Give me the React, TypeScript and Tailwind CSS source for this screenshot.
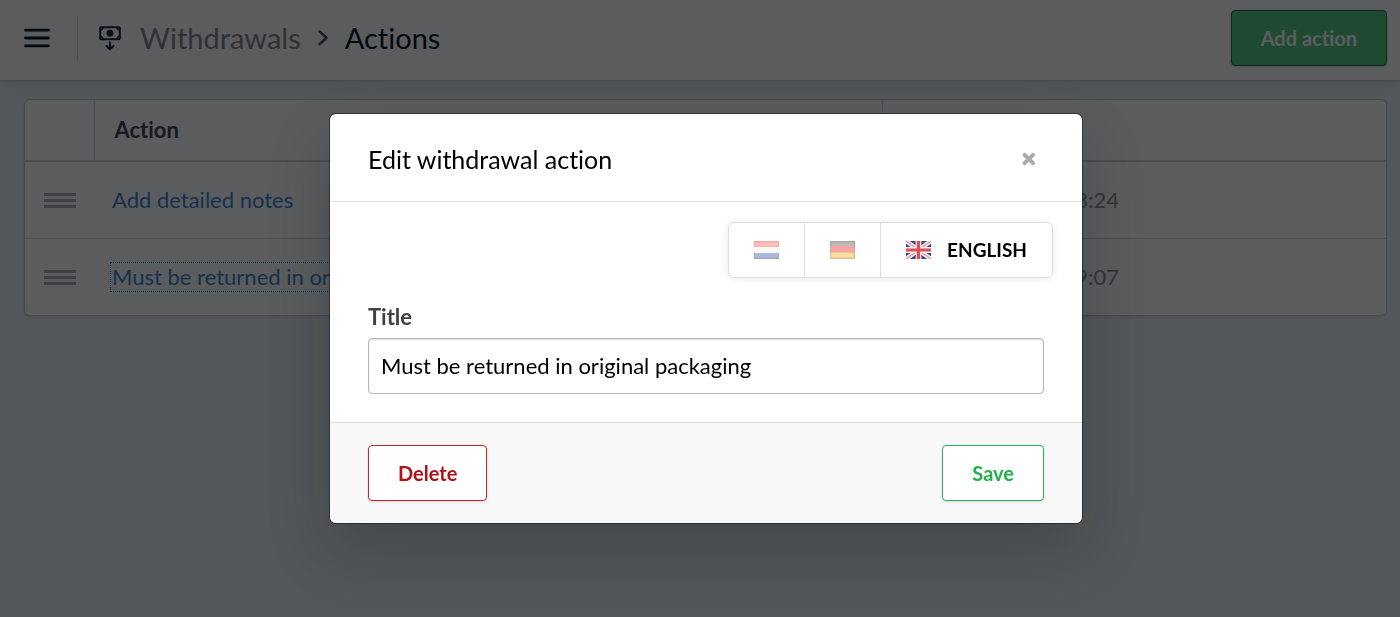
import { useState } from 'react';

const rows = [
  { title: 'Add detailed notes', date: '12 Aug. 2021 at 08:24', focused: false },
  { title: 'Must be returned in original packaging', date: '12 Aug. 2021 at 09:07', focused: true },
];

function MenuIcon() {
  return (
    <svg width="26" height="20" viewBox="0 0 26 20" fill="none" stroke="#04101e" strokeWidth="2.8" strokeLinecap="round" aria-hidden="true">
      <path d="M1.5 2.2h23M1.5 10h23M1.5 17.9h23" />
    </svg>
  );
}

function WithdrawIcon() {
  return (
    <svg width="24" height="26" viewBox="0 0 24 26" fill="none" stroke="#14202c" aria-hidden="true">
      <rect x="2.2" y="2.2" width="19.6" height="12" rx="0.8" strokeWidth="2" />
      <circle cx="12" cy="8.2" r="3.4" fill="#14202c" stroke="none" />
      <path d="M3 5.4L5.4 3M21 5.4L18.6 3M3 11l2.4 2.4M21 11l-2.4 2.4" strokeWidth="1.3" />
      <path d="M12 17.6v6M8.6 21L12 24.2l3.4-3.2" strokeWidth="2" strokeLinecap="round" strokeLinejoin="round" />
    </svg>
  );
}

function ChevronIcon() {
  return (
    <svg width="12" height="18" viewBox="0 0 12 18" fill="none" stroke="#4a5158" strokeWidth="2.6" strokeLinecap="round" strokeLinejoin="round" aria-hidden="true">
      <path d="M2.5 2.4l7 6.4-7 6.4" />
    </svg>
  );
}

function GripIcon() {
  return (
    <svg width="32" height="16" viewBox="0 0 32 16" fill="#a8afb1" aria-hidden="true">
      <path d="M0 1h32v3H0zM0 7h32v3H0zM0 13h32v3H0z" />
    </svg>
  );
}

function CloseIcon() {
  return (
    <svg width="14" height="14" viewBox="0 0 14 14" fill="none" stroke="#a9aaab" strokeWidth="4" strokeLinecap="round" aria-hidden="true">
      <path d="M2.6 2.8l8.4 8.4M11 2.8l-8.4 8.4" />
    </svg>
  );
}

function FlagNl() {
  return (
    <svg width="25" height="18" viewBox="0 0 26 18" preserveAspectRatio="none" aria-hidden="true">
      <path fill="#f3a8a5" d="M0 0h26v6H0z" />
      <path fill="#fbbdba" d="M1 1.5h24v4H1z" />
      <path fill="#f8f8f8" d="M0 6h26v6H0z" />
      <path fill="#a2a8bb" d="M0 12h26v6H0z" />
      <path fill="#adb9dc" d="M1 12h24v4.5H1z" />
    </svg>
  );
}

function FlagDe() {
  return (
    <svg width="25" height="18" viewBox="0 0 26 18" preserveAspectRatio="none" aria-hidden="true">
      <path fill="#a9a9a9" d="M0 0h26v6H0z" />
      <path fill="#c2bcbc" d="M1.5 1.5h23V6h-23z" />
      <path fill="#dba5a3" d="M0 6h26v6H0z" />
      <path fill="#f6a5a2" d="M1.5 5h23v6.5h-23z" />
      <path fill="#e3bd9c" d="M0 12h26v6H0z" />
      <path fill="#fbdf9c" d="M1.5 11.5h23v5h-23z" />
    </svg>
  );
}

function FlagGb() {
  return (
    <svg width="25" height="18" viewBox="0 0 26 18" preserveAspectRatio="none" aria-hidden="true">
      <path fill="#3d4580" d="M0 0h26v18H0z" />
      <path stroke="#f0eaf0" strokeWidth="4.6" d="M0 0l26 18M26 0L0 18" />
      <path stroke="#dd9aa4" strokeWidth="1.2" d="M0 0l26 18M26 0L0 18" />
      <path fill="#f8e8ea" d="M10 0h6v18h-6zM0 6h26v6H0z" />
      <path fill="#dc5058" d="M11.3 0h3.4v18h-3.4zM0 7.6h26v2.8H0z" />
    </svg>
  );
}

const languages = [
  { code: 'nl', name: 'Nederlands', Flag: FlagNl },
  { code: 'de', name: 'Deutsch', Flag: FlagDe },
  { code: 'en', name: 'English', Flag: FlagGb },
];

export default function App() {
  const [title, setTitle] = useState('Must be returned in original packaging');
  const [language, setLanguage] = useState('en');

  return (
    <div className="min-h-screen bg-[#ebf1f5] font-['Lato',sans-serif] text-[22px] leading-8 [font-variant-ligatures:none]">
      <header className="bg-white pb-1 shadow-[0_1px_2px_rgba(20,30,40,0.12),0_4px_16px_rgba(20,30,40,0.12)]">
        <div className="flex h-19 items-center justify-between pr-[13px] pl-6">
          <div className="flex items-center">
            <button type="button" aria-label="Menu" className="pr-[27px]">
              <MenuIcon />
            </button>
            <nav aria-label="Breadcrumb" className="flex h-11 items-center border-l border-[#d9dadb] pl-5 text-[29px]">
              <WithdrawIcon />
              <a href="#withdrawals" className="ml-[18px] text-[#848689]">Withdrawals</a>
              <span className="mx-4"><ChevronIcon /></span>
              <span className="text-[#04101e]">Actions</span>
            </nav>
          </div>
          <button type="button" className="h-14 rounded border border-[#2a6b40] bg-[#57cb80] px-[29px] text-xl font-bold text-white shadow-sm">
            Add action
          </button>
        </div>
      </header>

      <main className="pt-[19px] pr-[13px] pl-6">
        <div className="rounded-md border border-[#c3cbcf] bg-white shadow-sm">
          <table className="w-full table-fixed border-collapse text-left">
            <thead>
              <tr className="h-[61px] border-b-2 border-[#d0d2d4]">
                <td className="w-[69px] border-r border-[#dcdee0]" />
                <th className="border-r border-[#dcdee0] px-5 font-bold text-[#41474c]">Action</th>
                <th className="w-[504px] px-5 font-bold text-[#41474c]">Modified</th>
              </tr>
            </thead>
            <tbody>
              {rows.map((row) => (
                <tr key={row.title} className="h-[77px] border-t border-[#d6d8da]">
                  <td className="pl-[19px]"><GripIcon /></td>
                  <td className="px-4">
                    <a
                      href="#edit"
                      className={row.focused ? 'block w-fit border border-dotted border-[#1e70bf] px-px leading-7' : 'block w-fit px-0.5 leading-7'}
                    >
                      <span className="text-[#3f84cc]">{row.title}</span>
                    </a>
                  </td>
                  <td className="px-5 text-[#8f9294]">{row.date}</td>
                </tr>
              ))}
            </tbody>
          </table>
        </div>
      </main>

      <div className="fixed inset-0 flex items-start justify-center bg-[rgb(2,4,8)]/65 pt-[114px] pl-3">
        <section
          role="dialog"
          aria-modal="true"
          aria-labelledby="dialog-title"
          className="w-full max-w-[752px] overflow-hidden rounded-md bg-white shadow-[0_0_0_1px_rgba(10,15,25,0.5),0_28px_64px_rgba(0,0,0,0.2)]"
        >
          <div className="flex h-22 items-center justify-between border-b border-[#dedfe0] px-[38px] pt-[3px]">
            <h2 id="dialog-title" className="text-[25px] text-black">Edit withdrawal action</h2>
            <button type="button" aria-label="Close" className="p-2">
              <CloseIcon />
            </button>
          </div>

          <div className="flex flex-col px-[38px] pt-5 pb-7">
            <div className="-mr-[9px] flex self-end rounded-md border border-[#dcdddd] shadow-[0_1px_8px_rgba(0,0,0,0.08)]">
              {languages.map(({ code, name, Flag }) => (
                <button
                  key={code}
                  type="button"
                  aria-label={name}
                  aria-pressed={language === code}
                  onClick={() => setLanguage(code)}
                  className="flex h-[54px] items-center gap-4 border-l border-[#dcdddd] px-[25px] text-[19px] font-bold text-black uppercase first:border-l-0"
                >
                  <Flag />
                  {language === code && <span>{name}</span>}
                </button>
              ))}
            </div>

            <label htmlFor="action-title" className="mt-[23px] mb-[5px] font-bold text-[#3f4245]">Title</label>
            <input
              id="action-title"
              type="text"
              value={title}
              onChange={(event) => setTitle(event.target.value)}
              className="h-14 w-full rounded border border-[#b3b9bb] bg-white px-3 pb-0.5 text-black shadow-[inset_0_1px_2px_rgba(0,0,0,0.12)] outline-none"
            />
          </div>

          <div className="flex justify-between border-t border-[#dedfe0] bg-[#f8f8f8] px-[38px] py-[22px]">
            <button type="button" className="h-14 rounded border border-[#c0272d] bg-white px-[29px] text-xl font-bold text-[#b01217] shadow-sm">
              Delete
            </button>
            <button type="button" className="h-14 rounded border border-[#2bb553] bg-white px-[29px] text-xl font-bold text-[#25b04c] shadow-sm">
              Save
            </button>
          </div>
        </section>
      </div>
    </div>
  );
}
